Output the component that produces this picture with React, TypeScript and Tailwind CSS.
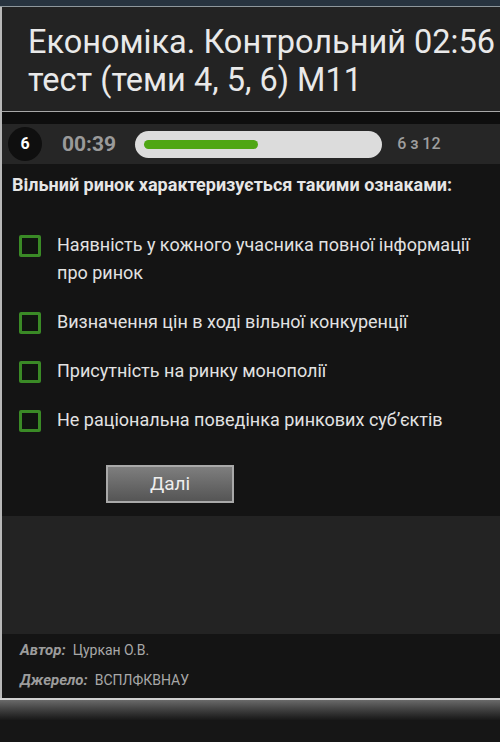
import React from "react";

const options = [
  "Наявність у кожного учасника повної інформації про ринок",
  "Визначення цін в ході вільної конкуренції",
  "Присутність на ринку монополії",
  "Не раціональна поведінка ринкових суб’єктів",
];

export default function App() {
  return (
    <div
      className="w-[500px] h-[742px] flex flex-col bg-[#141414] overflow-hidden"
      style={{ fontFamily: "Roboto, 'Noto Sans', 'Liberation Sans', sans-serif" }}
    >
      <div className="h-[6px] bg-[#27333f] shrink-0" />
      <div className="h-[1px] bg-[#8e979c] shrink-0" />
      <div className="flex flex-col border-l-2 border-[#b8b8b8] shrink-0">
        {/* Header */}
        <div className="h-[104px] bg-[#232323] pl-[26px] pt-[16px]">
          <div className="text-[32.5px] leading-[38px] text-[#e9e9e9] whitespace-nowrap">
            Економіка. Контрольний 02:56
            <br />
            тест (теми 4, 5, 6) М11
          </div>
        </div>
        <div className="h-[1px] bg-[#a8a8a8]" />
        <div className="h-[12px] bg-[#0e0e0e]" />
        {/* Status bar */}
        <div className="h-[40px] bg-[#262626] flex items-center">
          <div className="ml-[6px] w-[34px] h-[34px] rounded-full bg-[#0f0f0f] flex items-center justify-center text-white font-bold text-[16px]">
            6
          </div>
          <div className="ml-[20px] text-[21px] font-bold text-[#9a9a9a] leading-none">00:39</div>
          <div className="ml-[19px] w-[247px] h-[27px] rounded-full bg-[#dcdcdc] flex items-center pl-[9px]">
            <div className="w-[114px] h-[9px] rounded-full bg-[#4fa614]" />
          </div>
          <div className="ml-[15px] text-[16px] font-medium text-[#9e9e9e] leading-none">6 з 12</div>
        </div>
        {/* Question */}
        <div className="bg-[#141414] h-[352px] flex flex-col pt-[9px]">
          <div className="pl-[10px] text-[18px] leading-[24px] font-bold text-[#e6e6e6] whitespace-nowrap">
            Вільний ринок характеризується такими ознаками:
          </div>
          <div className="flex flex-col gap-[21px] mt-[34px]">
            {options.map((o) => (
              <div key={o} className="flex items-start pl-[17px] pr-[12px]">
                <div className="mt-[4px] w-[22px] h-[22px] shrink-0 rounded-[2px] border-[3px] border-[#3a8a26] bg-[#101410]" />
                <div className="ml-[16px] text-[18px] leading-[28px] text-[#e2e2e2]">
                  {o === options[0] ? (
                    <>
                      Наявність у кожного учасника повної інформації
                      <br />
                      про ринок
                    </>
                  ) : (
                    o
                  )}
                </div>
              </div>
            ))}
          </div>
          <div className="mt-[31px] ml-[104px] w-[128px] h-[38px] border-2 border-[#a9a9a9] bg-gradient-to-b from-[#7e7e7e] to-[#555555] flex items-center justify-center text-[19px] text-[#eeeeee]">
            Далі
          </div>
        </div>
        <div className="h-[118px] bg-[#232323]" />
        {/* Footer */}
        <div className="h-[64px] bg-[#141414] flex flex-col pl-[18px] pt-[1px] text-[14px] text-[#a8a8a8]">
          <div className="h-[30px] flex items-center">
            <span className="font-bold italic text-[15px] text-[#9c9c9c]">Автор:</span>
            <span className="ml-[7px]">Цуркан О.В.</span>
          </div>
          <div className="h-[30px] flex items-center">
            <span className="font-bold italic text-[15px] text-[#9c9c9c]">Джерело:</span>
            <span className="ml-[7px]">ВСПЛФКВНАУ</span>
          </div>
        </div>
      </div>
      <div className="h-[2px] bg-[#d0d0d0] shrink-0" />
      <div className="h-[20px] bg-gradient-to-b from-[#6a6a6a] to-[#181818] shrink-0" />
      <div className="flex-1 bg-[#161616]" />
    </div>
  );
}
